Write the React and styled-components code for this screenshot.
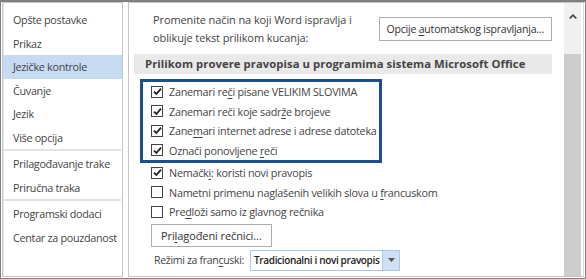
import React from "react";
import styled, { createGlobalStyle } from "styled-components";

const GlobalStyle = createGlobalStyle`
  html, body {
    margin: 0;
    padding: 0;
    background: #ffffff;
  }
  body {
    font-family: "Open Sans", "Noto Sans", sans-serif;
    font-size: 11px;
    letter-spacing: -0.1px;
    color: #444444;
  }
`;

const navItems = [
  { label: "Opšte postavke" },
  { label: "Prikaz" },
  { label: "Jezičke kontrole", active: true },
  { label: "Čuvanje" },
  { label: "Jezik" },
  { label: "Više opcija", separator: true },
  { label: "Prilagođavanje trake" },
  { label: "Priručna traka", separator: true },
  { label: "Programski dodaci" },
  { label: "Centar za pouzdanost" },
];

// label parts: [before, underlined, after]
const highlighted = [
  ["Zanemari re", "č", "i pisane VELIKIM SLOVIMA"],
  ["Zanemari reči koje sadr", "ž", "e brojeve"],
  ["Zane", "m", "ari internet adrese i adrese datoteka"],
  ["Označi ponovljene ", "r", "eči"],
];

const others = [
  { parts: ["Nemačk", "i", ": koristi novi pravopis"], checked: true },
  { parts: ["Nametni primenu naglašenih velikih slova u ", "f", "rancuskom"], checked: false },
  { parts: ["Pre", "d", "loži samo iz glavnog rečnika"], checked: false },
];

function CheckRow({ parts, checked }) {
  return (
    <Row>
      <Box>
        {checked && (
          <svg width="9" height="9" viewBox="0 0 9 9">
            <path d="M1 4.6 L3.4 7 L8 1.6" fill="none" stroke="#222" strokeWidth="1.8" />
          </svg>
        )}
      </Box>
      <span>
        {parts[0]}
        <U>{parts[1]}</U>
        {parts[2]}
      </span>
    </Row>
  );
}

export default function App() {
  return (
    <>
      <GlobalStyle />
      <Frame>
        <Sidebar>
          {navItems.map((item) => (
            <React.Fragment key={item.label}>
              <NavItem active={item.active}>{item.label}</NavItem>
              {item.separator && <Separator />}
            </React.Fragment>
          ))}
        </Sidebar>
        <Panel>
          <Content>
            <TopRow>
              <Intro>
                Promenite način na koji Word ispravlja i
                <br />
                oblikuje tekst prilikom kucanja:
              </Intro>
              <Button>
                Opcije <U>a</U>utomatskog ispravljanja...
              </Button>
            </TopRow>
            <SectionHeader>
              Prilikom provere pravopisa u programima sistema Microsoft Office
            </SectionHeader>
            <Marked>
              {highlighted.map((p) => (
                <CheckRow key={p.join("")} parts={p} checked />
              ))}
            </Marked>
            <List>
              {others.map((o) => (
                <CheckRow key={o.parts.join("")} parts={o.parts} checked={o.checked} />
              ))}
            </List>
            <DictButton>
              Pri<U>l</U>agođeni rečnici...
            </DictButton>
            <ModeRow>
              <ModeLabel>
                Režimi za fran<U>c</U>uski:
              </ModeLabel>
              <Select>
                <SelectValue>Tradicionalni i novi pravopis</SelectValue>
                <SelectArrow>
                  <svg width="7" height="4" viewBox="0 0 7 4">
                    <path d="M0 0 H7 L3.5 4 Z" fill="#555" />
                  </svg>
                </SelectArrow>
              </Select>
            </ModeRow>
          </Content>
          <Scrollbar>
            <ScrollUp>
              <svg width="8" height="5" viewBox="0 0 8 5">
                <path d="M0.7 4.3 L4 1.2 L7.3 4.3" fill="none" stroke="#444" strokeWidth="1.6" />
              </svg>
            </ScrollUp>
            <Thumb />
          </Scrollbar>
        </Panel>
      </Frame>
    </>
  );
}

const Frame = styled.div`
  width: 586px;
  height: 279px;
  box-sizing: border-box;
  border: 1px solid #7f7f7f;
  border-top: 2px solid #7f7f7f;
  display: flex;
  gap: 5px;
  padding: 0 1px 1px 1px;
  background: #ffffff;
  overflow: hidden;
`;

const Sidebar = styled.div`
  width: 121px;
  flex-shrink: 0;
  box-sizing: border-box;
  border: 1px solid #c6c6c6;
  box-shadow: inset 1px 0 0 #e6e6e6;
  padding-top: 5px;
  display: flex;
  flex-direction: column;
  overflow: hidden;
`;

const NavItem = styled.div`
  height: 23.5px;
  line-height: 23.5px;
  padding-left: 10px;
  white-space: nowrap;
  font-size: 10.8px;
  letter-spacing: -0.3px;
  color: #444444;
  background: ${(p) => (p.active ? "#c6daf2" : "transparent")};
`;

const Separator = styled.div`
  height: 2px;
  margin: 0 1px 1px;
  background: #e3e3e3;
`;

const Panel = styled.div`
  flex: 1;
  box-sizing: border-box;
  border: 1px solid #c6c6c6;
  display: flex;
`;

const Content = styled.div`
  flex: 1;
  padding: 7px 12px 0 5px;
  display: flex;
  flex-direction: column;
`;

const TopRow = styled.div`
  display: flex;
  justify-content: space-between;
  align-items: flex-start;
  padding-left: 19px;
`;

const Intro = styled.div`
  line-height: 18px;
  padding-top: 1px;
`;

const Button = styled.div`
  box-sizing: border-box;
  height: 24px;
  line-height: 22px;
  padding: 0 7px;
  border: 1px solid #adadad;
  background: #fdfdfd;
  color: #333333;
  font-size: 10.5px;
  letter-spacing: -0.2px;
  margin-top: 7px;
  white-space: nowrap;
`;

const U = styled.span`
  text-decoration: underline;
  text-underline-offset: 2px;
`;

const SectionHeader = styled.div`
  margin-top: 7px;
  height: 20px;
  line-height: 20px;
  background: #e9e9e9;
  font-size: 11.3px;
  font-weight: 700;
  letter-spacing: 0.05px;
  color: #444444;
  padding-left: 11px;
  white-space: nowrap;
`;

const Marked = styled.div`
  margin-top: 5px;
  margin-left: 6px;
  width: 242px;
  box-sizing: border-box;
  border: 3px solid #1f4e8d;
  padding: 0 0 0 8px;
  display: flex;
  flex-direction: column;
`;

const List = styled.div`
  display: flex;
  flex-direction: column;
  padding-left: 17px;
`;

const Row = styled.div`
  height: 19.5px;
  display: flex;
  align-items: center;
  gap: 6px;
  white-space: nowrap;
  font-size: 10.8px;
  letter-spacing: -0.25px;
`;

const Box = styled.div`
  width: 12px;
  height: 12px;
  flex-shrink: 0;
  box-sizing: border-box;
  border: 1px solid #444444;
  background: #ffffff;
  display: flex;
  align-items: center;
  justify-content: center;
`;

const DictButton = styled(Button)`
  align-self: flex-start;
  margin: 2px 0 0 17px;
  height: 23px;
  line-height: 21px;
  padding: 0 9px;
  font-size: 11px;
  letter-spacing: -0.1px;
`;

const ModeRow = styled.div`
  display: flex;
  align-items: center;
  gap: 6px;
  margin: 3px 0 0 20px;
  white-space: nowrap;
`;

const ModeLabel = styled.span`
  font-size: 10.5px;
  letter-spacing: -0.3px;
`;

const Select = styled.div`
  display: flex;
  height: 21px;
  box-sizing: border-box;
  border: 1px solid #abc7e6;
`;

const SelectValue = styled.div`
  padding: 0 3px 0 3px;
  line-height: 19px;
  font-size: 10px;
  font-weight: 600;
  letter-spacing: -0.35px;
  color: #222222;
`;

const SelectArrow = styled.div`
  width: 16px;
  background: #cfe0f4;
  border-left: 1px solid #abc7e6;
  display: flex;
  align-items: center;
  justify-content: center;
`;

const Scrollbar = styled.div`
  width: 17px;
  flex-shrink: 0;
  background: #f0f0f0;
  display: flex;
  flex-direction: column;
  border-right: 2px solid #ffffff;
  box-shadow: 1px 0 0 #d9d9d9;
`;

const ScrollUp = styled.div`
  height: 21px;
  display: flex;
  align-items: center;
  justify-content: center;
  padding-top: 6px;
  box-sizing: border-box;
`;

const Thumb = styled.div`
  margin-top: 30px;
  flex: 1;
  background: #cdcdcd;
`;
